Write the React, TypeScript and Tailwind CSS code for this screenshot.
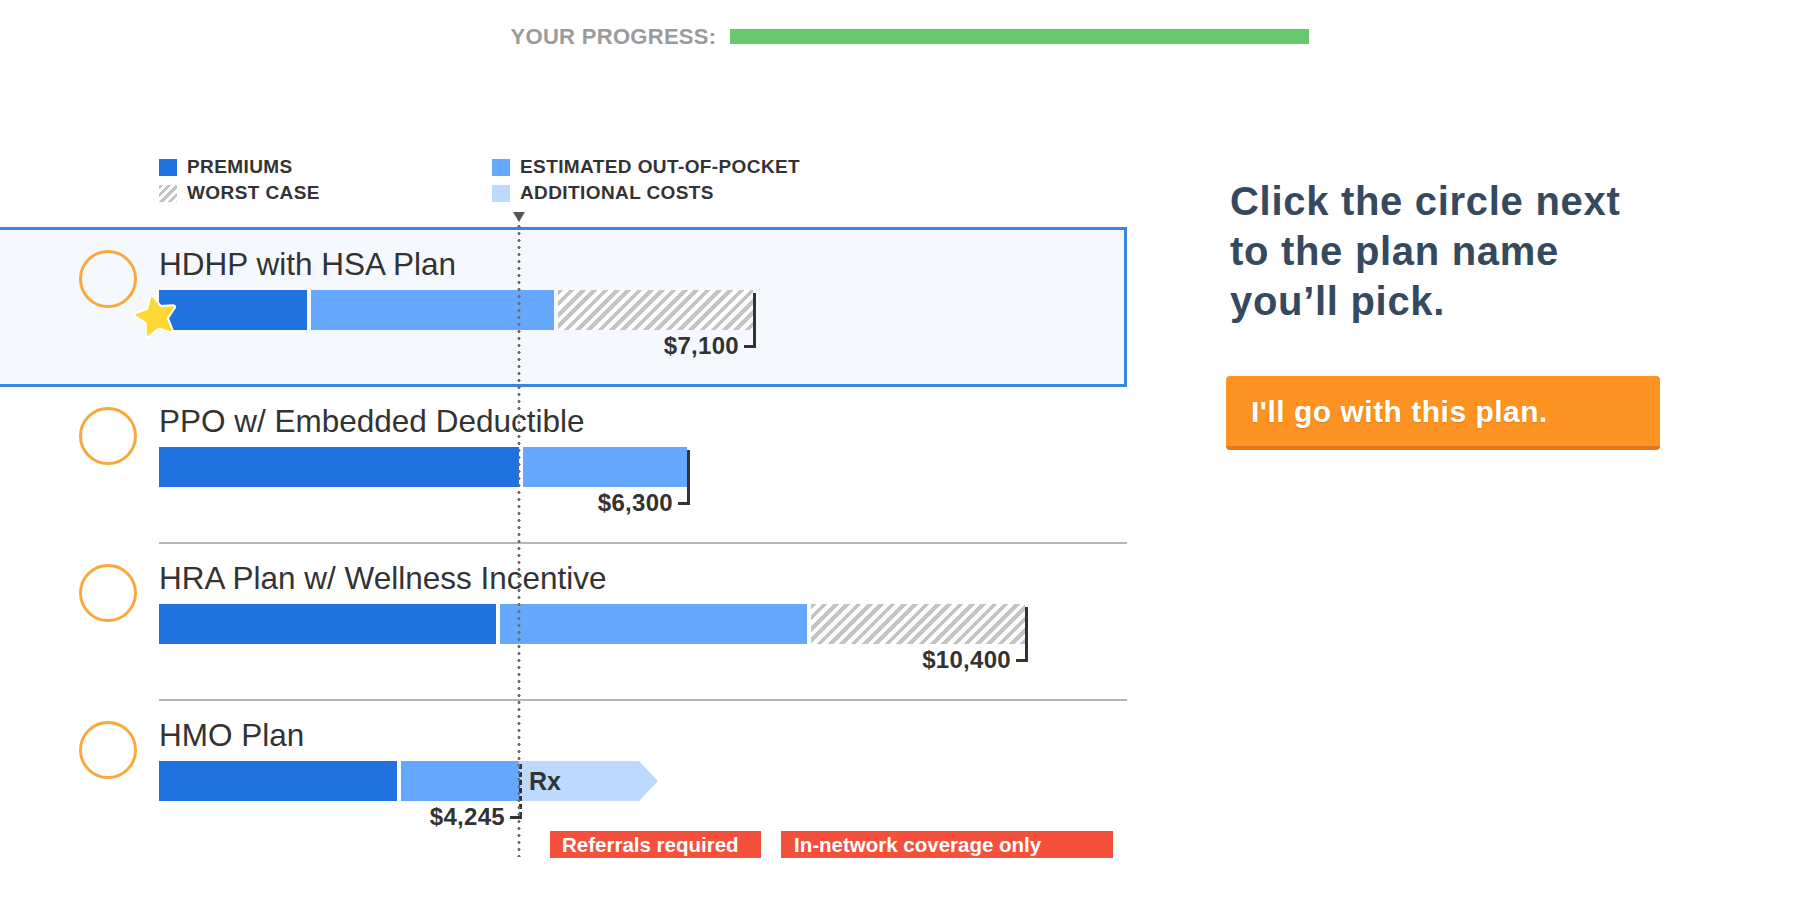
import React from "react";

type SegKind = "prem" | "oop" | "worst" | "rx";
type Seg = { kind: SegKind; w: number };
type Plan = {
  name: string;
  segs: Seg[];
  total: string;
  bracket: number;
  rowClass: string;
  lineClass: string;
  star?: boolean;
  tags?: boolean;
};

const solidLine = "bg-[#333333]";
const dashedLine =
  "bg-[image:repeating-linear-gradient(180deg,#333333_0px,#333333_5px,transparent_5px,transparent_8px)]";

const plans: Plan[] = [
  {
    name: "HDHP with HSA Plan",
    segs: [
      { kind: "prem", w: 148 },
      { kind: "oop", w: 243 },
      { kind: "worst", w: 195 },
    ],
    total: "$7,100",
    bracket: 594,
    rowClass: "h-[160px] border-y-[3px] border-r-[3px] border-[#3a86e1] bg-[#f5f9fe]",
    lineClass: solidLine,
    star: true,
  },
  {
    name: "PPO w/ Embedded Deductible",
    segs: [
      { kind: "prem", w: 360 },
      { kind: "oop", w: 164 },
    ],
    total: "$6,300",
    bracket: 528,
    rowClass: "h-[155px]",
    lineClass: solidLine,
  },
  {
    name: "HRA Plan w/ Wellness Incentive",
    segs: [
      { kind: "prem", w: 337 },
      { kind: "oop", w: 307 },
      { kind: "worst", w: 214 },
    ],
    total: "$10,400",
    bracket: 866,
    rowClass: "h-[155px]",
    lineClass: solidLine,
  },
  {
    name: "HMO Plan",
    segs: [
      { kind: "prem", w: 238 },
      { kind: "oop", w: 118 },
      { kind: "rx", w: 139 },
    ],
    total: "$4,245",
    bracket: 360,
    rowClass: "h-[206px]",
    lineClass: dashedLine,
    tags: true,
  },
];

function Segment({ seg, first }: { seg: Seg; first: boolean }) {
  const gap = first || seg.kind === "rx" ? "" : "ml-[4px]";
  if (seg.kind === "prem")
    return <div className={`shrink-0 h-full bg-[#2172de] ${gap}`} style={{ width: seg.w }} />;
  if (seg.kind === "oop")
    return <div className={`shrink-0 h-full bg-[#65a8fe] ${gap}`} style={{ width: seg.w }} />;
  if (seg.kind === "worst")
    return (
      <div
        className={`shrink-0 h-full bg-[image:repeating-linear-gradient(135deg,#c4c4c4_0px,#c4c4c4_4px,#ffffff_4px,#ffffff_8px)] ${gap}`}
        style={{ width: seg.w }}
      />
    );
  return (
    <div
      className="shrink-0 h-full bg-[#bdd9fe] [clip-path:polygon(0_0,calc(100%_-_19px)_0,100%_50%,calc(100%_-_19px)_100%,0_100%)] flex items-center pl-[10px]"
      style={{ width: seg.w }}
    >
      <span className="text-[25px] font-bold text-[#333] leading-none">Rx</span>
    </div>
  );
}

const STAR =
  "M25 5 L30.88 16.91 L44.02 18.82 L34.51 28.09 L36.76 41.18 L25 35 L13.24 41.18 L15.49 28.09 L5.98 18.82 L19.12 16.91 Z";

function Star() {
  return (
    <svg
      className="absolute left-[-28px] top-[2px] w-[50px] h-[50px] z-10 rotate-[-12deg]"
      viewBox="0 0 50 50"
    >
      <path d={STAR} fill="#ffffff" stroke="#ffffff" strokeWidth="5.5" strokeLinejoin="round" />
      <path d={STAR} fill="#fdd835" stroke="#fdd835" strokeWidth="1.5" strokeLinejoin="round" />
    </svg>
  );
}

function PlanRow({ p }: { p: Plan }) {
  return (
    <div className={`flex pl-[79px] ${p.rowClass}`}>
      <div className="mt-[20px] w-[58px] h-[58px] rounded-full border-[3px] border-[#f9a93b] shrink-0" />
      <div className="ml-[22px] pt-[16px] flex-1">
        <div className="text-[31.5px] leading-[36px] text-[#333333] whitespace-nowrap">{p.name}</div>
        <div className="relative mt-[8px]" style={{ width: p.bracket + 3 }}>
          <div className="flex h-[40px]">
            {p.segs.map((s, i) => (
              <Segment key={i} seg={s} first={i === 0} />
            ))}
          </div>
          {p.star && <Star />}
          <div className={`absolute right-0 top-[3px] w-[3px] h-[55px] ${p.lineClass}`} />
          <div className="mt-[3px] h-[26px] flex items-center justify-end">
            <span className="text-[24px] font-bold text-[#333333] tracking-[0.3px] leading-[26px]">
              {p.total}
            </span>
            <div className="ml-[5px] w-[12px] h-[3px] bg-[#333333]" />
          </div>
        </div>
        {p.tags && (
          <div className="flex mt-[1px] ml-[391px] gap-[20px]">
            <div className="w-[211px] h-[27px] bg-[#f5503b] text-white font-bold text-[20.5px] leading-[27px] pl-[12px] whitespace-nowrap">
              Referrals required
            </div>
            <div className="w-[332px] h-[27px] bg-[#f5503b] text-white font-bold text-[20.5px] leading-[27px] pl-[13px] whitespace-nowrap">
              In-network coverage only
            </div>
          </div>
        )}
      </div>
    </div>
  );
}

function LegendItem({ swatch, label }: { swatch: string; label: string }) {
  return (
    <div className="flex items-center h-[26px]">
      <div className={`w-[18px] h-[17px] shrink-0 ${swatch}`} />
      <span className="ml-[10px] text-[19px] font-bold text-[#333333] tracking-[0.4px] leading-[26px] whitespace-nowrap">
        {label}
      </span>
    </div>
  );
}

export default function App() {
  return (
    <div className="w-[1820px] h-[906px] bg-white overflow-hidden font-['Liberation_Sans',Arial,sans-serif]">
      <header className="h-[73px] flex items-center justify-center">
        <span className="text-[22px] font-bold text-[#9b9b9b] tracking-[0.3px] leading-none">YOUR PROGRESS:</span>
        <div className="ml-[14px] w-[579px] h-[15px] bg-[#66c96f]" />
      </header>
      <main className="flex">
        <section className="relative w-[1127px] shrink-0">
          <div className="pt-[81px] pl-[159px] grid grid-cols-[333px_auto]">
            <LegendItem swatch="bg-[#2172de]" label="PREMIUMS" />
            <LegendItem swatch="bg-[#65a8fe]" label="ESTIMATED OUT-OF-POCKET" />
            <LegendItem
              swatch="bg-[image:repeating-linear-gradient(135deg,#c4c4c4_0px,#c4c4c4_3px,#ffffff_3px,#ffffff_6px)]"
              label="WORST CASE"
            />
            <LegendItem swatch="bg-[#bdd9fe]" label="ADDITIONAL COSTS" />
          </div>
          <div className="mt-[21px]">
            <PlanRow p={plans[0]} />
            <PlanRow p={plans[1]} />
            <div className="ml-[159px] h-[2px] bg-[#b5b5b5]" />
            <PlanRow p={plans[2]} />
            <div className="ml-[159px] h-[2px] bg-[#b5b5b5]" />
            <PlanRow p={plans[3]} />
          </div>
          <div className="absolute left-[513px] top-[139px] w-0 h-0 border-l-[6px] border-r-[6px] border-t-[10px] border-l-transparent border-r-transparent border-t-[#555555] z-20" />
          <div className="absolute left-[517px] top-[150px] w-[4px] h-[634px] z-20 bg-[image:radial-gradient(circle,#6f6f6f_1.4px,transparent_1.7px)] bg-[length:4px_7px]" />
        </section>
        <aside className="ml-[99px] w-[434px] shrink-0 pt-[103px]">
          <h1 className="pl-[4px] text-[40px] font-bold leading-[50px] tracking-[0.7px] text-[#354a5f] whitespace-nowrap">
            Click the circle next
            <br />
            to the plan name
            <br />
            you’ll pick.
          </h1>
          <button className="mt-[50px] w-[434px] h-[74px] bg-[#fc9322] border-b-[4px] border-[#e5761f] rounded-[4px] text-left pl-[25px] text-white font-bold text-[30px] tracking-[0.5px] [text-shadow:0_1px_2px_rgba(0,0,0,0.12)]">
            I'll go with this plan.
          </button>
        </aside>
      </main>
    </div>
  );
}
